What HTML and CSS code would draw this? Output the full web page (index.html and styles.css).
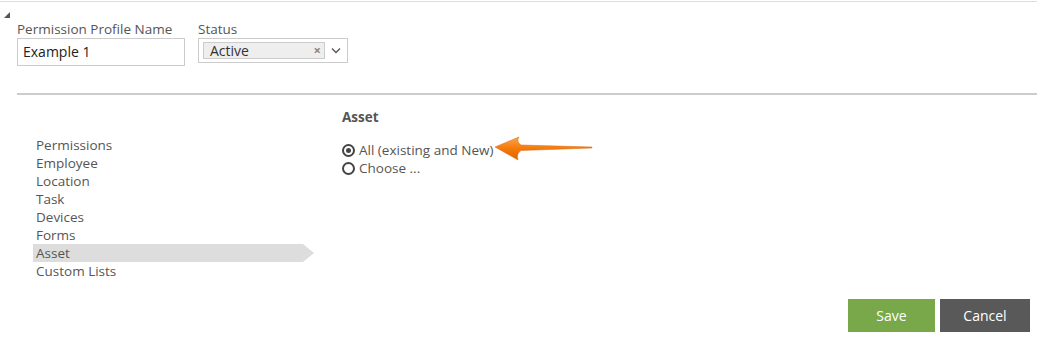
FILE: index.html
```html
<!DOCTYPE html>
<html>
<head>
<meta charset="utf-8">
<link rel="stylesheet" href="styles.css">
</head>
<body>
<div class="page">
  <div class="topline"></div>
  <div class="corner"></div>
  <div class="header">
    <div class="field">
      <label class="lbl">Permission Profile Name</label>
      <div class="input">Example 1</div>
    </div>
    <div class="field">
      <label class="lbl">Status</label>
      <div class="select">
        <div class="tag"><span>Active</span><span class="x">&#215;</span></div>
        <svg class="chev" width="10" height="7" viewBox="0 0 10 7"><path d="M1 1.5 L5 5.5 L9 1.5" fill="none" stroke="#555" stroke-width="1.3"/></svg>
      </div>
    </div>
  </div>
  <div class="divider"></div>
  <div class="main">
    <ul class="menu">
      <li>Permissions</li>
      <li>Employee</li>
      <li>Location</li>
      <li>Task</li>
      <li>Devices</li>
      <li>Forms</li>
      <li class="active">Asset</li>
      <li>Custom Lists</li>
    </ul>
    <div class="content">
      <h3 class="title">Asset</h3>
      <div class="radio-row">
        <span class="radio checked"></span><span>All (existing and New)</span>
        <svg class="arrow" width="100" height="30" viewBox="0 0 100 30">
          <defs>
            <linearGradient id="g" x1="0" y1="0" x2="0" y2="1">
              <stop offset="0" stop-color="#ffa448"/>
              <stop offset="0.5" stop-color="#f47a0c"/>
              <stop offset="1" stop-color="#dc6200"/>
            </linearGradient>
          </defs>
          <path d="M2 14 L26 4 Q23 9 28 12 L99 14 L99 15 L28 17.5 Q23 21 25 27 Z" fill="url(#g)" stroke="#d96a10" stroke-width="0.5"/>
        </svg>
      </div>
      <div class="radio-row">
        <span class="radio"></span><span>Choose ...</span>
      </div>
    </div>
  </div>
  <div class="actions">
    <button class="btn save">Save</button>
    <button class="btn cancel">Cancel</button>
  </div>
</div>
</body>
</html>
```
FILE: styles.css
```css
html, body {
  margin: 0;
  padding: 0;
  background: #fff;
}
body {
  font-family: "Open Sans", "Noto Sans", sans-serif;
  font-size: 13px;
  color: #555;
}
.page {
  width: 1037px;
  height: 349px;
  position: relative;
}
.topline {
  height: 1px;
  background: #ddd;
  margin-top: 1px;
}
.corner {
  position: absolute;
  left: 4px;
  top: 11px;
  width: 0;
  height: 0;
  border-left: 6px solid transparent;
  border-bottom: 6px solid #555;
}
.header {
  display: flex;
  gap: 13px;
  padding: 19px 0 0 17px;
}
.field {
  display: flex;
  flex-direction: column;
}
.lbl {
  font-size: 13.5px;
  line-height: 17px;
  color: #555;
}
.input {
  width: 161px;
  height: 26px;
  border: 1px solid #ccc;
  padding-left: 5px;
  font-size: 14px;
  line-height: 26px;
  color: #222;
  box-sizing: content-box;
}
.select {
  width: 144px;
  height: 23px;
  border: 1px solid #ccc;
  display: flex;
  align-items: center;
  padding-left: 4px;
}
.tag {
  width: 122px;
  height: 17px;
  background: #eee;
  border: 1px solid #ccc;
  display: flex;
  align-items: center;
  justify-content: space-between;
  padding-left: 6px;
  box-sizing: border-box;
  font-size: 14px;
  color: #333;
  line-height: 17px;
}
.x {
  font-size: 13px;
  color: #888;
  font-weight: bold;
  margin-right: 3px;
}
.chev {
  margin-left: 6px;
}
.divider {
  height: 2px;
  background: #ccc;
  margin: 27px 0 0 17px;
}
.main {
  display: flex;
  padding-top: 12px;
}
.menu {
  list-style: none;
  margin: 0;
  padding: 29px 0 0 33px;
  width: 272px;
}
.menu li {
  height: 18px;
  line-height: 18px;
  padding-left: 3px;
  font-size: 13.5px;
  color: #555;
}
.menu li.active {
  background: #ddd;
  position: relative;
  width: 267px;
}
.menu li.active::after {
  content: "";
  position: absolute;
  right: -11px;
  top: 0;
  border-top: 9px solid transparent;
  border-bottom: 9px solid transparent;
  border-left: 11px solid #ddd;
}
.content {
  padding-left: 37px;
}
.title {
  margin: 1px 0 15px 0;
  font-size: 13.5px;
  font-weight: bold;
  color: #555;
  line-height: 18px;
}
.radio-row {
  display: flex;
  align-items: center;
  height: 18px;
  font-size: 13.5px;
  color: #555;
  position: relative;
}
.radio {
  width: 9px;
  height: 9px;
  border: 2px solid #444;
  border-radius: 50%;
  margin-right: 4px;
  position: relative;
}
.radio.checked::after {
  content: "";
  position: absolute;
  left: 2px;
  top: 2px;
  width: 5px;
  height: 5px;
  border-radius: 50%;
  background: #444;
}
.arrow {
  position: absolute;
  left: 151px;
  top: -8px;
}
.actions {
  position: absolute;
  left: 848px;
  top: 298px;
  display: flex;
  gap: 5px;
}
.btn {
  border: none;
  height: 33px;
  font-family: "Open Sans", "Noto Sans", sans-serif;
  font-size: 14px;
  color: #fff;
  cursor: pointer;
}
.save {
  width: 87px;
  background: #78a84a;
}
.cancel {
  width: 90px;
  background: #595959;
}
```
